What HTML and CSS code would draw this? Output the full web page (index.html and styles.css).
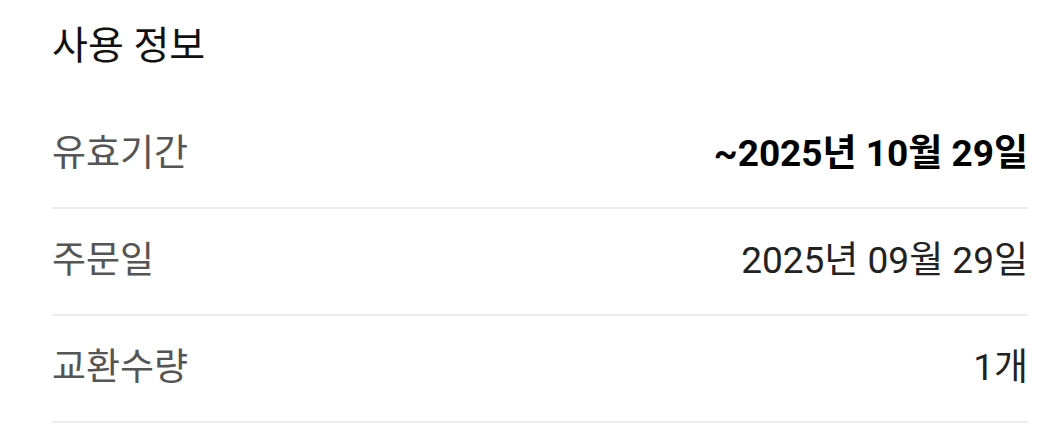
FILE: index.html
```html
<!DOCTYPE html>
<html lang="ko">
<head>
<meta charset="utf-8">
<link rel="stylesheet" href="styles.css">
</head>
<body>
<section class="usage">
  <h2 class="title">사용 정보</h2>
  <ul class="rows">
    <li class="row"><span class="label">유효기간</span><span class="value strong">~2025년 10월 29일</span></li>
    <li class="row"><span class="label">주문일</span><span class="value">2025년 09월 29일</span></li>
    <li class="row"><span class="label">교환수량</span><span class="value">1개</span></li>
  </ul>
</section>
</body>
</html>
```

FILE: styles.css
```css
* { box-sizing: border-box; }
html, body { margin: 0; padding: 0; background: #fff; }
body {
  font-family: Roboto, "Noto Sans CJK KR", sans-serif;
  width: 1060px;
  height: 428px;
  overflow: hidden;
}
.usage {
  padding: 0 32px 0 52px;
}
.title {
  margin: 0;
  padding-top: 23px;
  height: 102px;
  font-size: 39px;
  font-weight: 400;
  color: #111;
  line-height: 46px;
}
.rows {
  list-style: none;
  margin: 0;
  padding: 0;
}
.row {
  display: flex;
  justify-content: space-between;
  align-items: center;
  height: 107px;
  padding-bottom: 10px;
  border-bottom: 2px solid #ececec;
}
.label {
  font-size: 37px;
  color: #555;
}
.value {
  font-size: 37px;
  color: #222;
}
.value.strong {
  font-weight: 700;
  color: #000;
}
```
